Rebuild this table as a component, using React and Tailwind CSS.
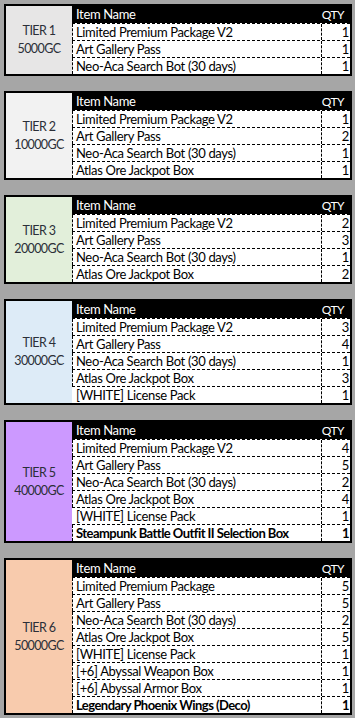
import React from 'react';

const tiers = [
  {
    name: 'TIER 1',
    price: '5000GC',
    bg: 'bg-[#e7e6e6]',
    items: [
      { name: 'Limited Premium Package V2', qty: 1 },
      { name: 'Art Gallery Pass', qty: 1 },
      { name: 'Neo-Aca Search Bot (30 days)', qty: 1 },
    ],
  },
  {
    name: 'TIER 2',
    price: '10000GC',
    bg: 'bg-[#f2f2f2]',
    items: [
      { name: 'Limited Premium Package V2', qty: 1 },
      { name: 'Art Gallery Pass', qty: 2 },
      { name: 'Neo-Aca Search Bot (30 days)', qty: 1 },
      { name: 'Atlas Ore Jackpot Box', qty: 1 },
    ],
  },
  {
    name: 'TIER 3',
    price: '20000GC',
    bg: 'bg-[#e2efda]',
    items: [
      { name: 'Limited Premium Package V2', qty: 2 },
      { name: 'Art Gallery Pass', qty: 3 },
      { name: 'Neo-Aca Search Bot (30 days)', qty: 1 },
      { name: 'Atlas Ore Jackpot Box', qty: 2 },
    ],
  },
  {
    name: 'TIER 4',
    price: '30000GC',
    bg: 'bg-[#ddebf7]',
    items: [
      { name: 'Limited Premium Package V2', qty: 3 },
      { name: 'Art Gallery Pass', qty: 4 },
      { name: 'Neo-Aca Search Bot (30 days)', qty: 1 },
      { name: 'Atlas Ore Jackpot Box', qty: 3 },
      { name: '[WHITE] License Pack', qty: 1, plain: true },
    ],
  },
  {
    name: 'TIER 5',
    price: '40000GC',
    bg: 'bg-[#cc99ff]',
    items: [
      { name: 'Limited Premium Package V2', qty: 4 },
      { name: 'Art Gallery Pass', qty: 5 },
      { name: 'Neo-Aca Search Bot (30 days)', qty: 2 },
      { name: 'Atlas Ore Jackpot Box', qty: 4 },
      { name: '[WHITE] License Pack', qty: 1, plain: true },
      { name: 'Steampunk Battle Outfit II Selection Box', qty: 1, bold: true },
    ],
  },
  {
    name: 'TIER 6',
    price: '50000GC',
    bg: 'bg-[#f8cbad]',
    items: [
      { name: 'Limited Premium Package', qty: 5 },
      { name: 'Art Gallery Pass', qty: 5 },
      { name: 'Neo-Aca Search Bot (30 days)', qty: 2 },
      { name: 'Atlas Ore Jackpot Box', qty: 5 },
      { name: '[WHITE] License Pack', qty: 1 },
      { name: '[+6] Abyssal Weapon Box', qty: 1 },
      { name: '[+6] Abyssal Armor Box', qty: 1 },
      { name: 'Legendary Phoenix Wings (Deco)', qty: 1, bold: true },
    ],
  },
];

function TierTable({ tier }) {
  return (
    <div className="flex border-2 border-black bg-white">
      {/* tier label */}
      <div className={`w-[66px] shrink-0 flex flex-col items-center justify-center text-[#2b2f38] text-[12.5px] tracking-[-0.6px] leading-[18px] ${tier.bg}`}>
        <span>{tier.name}</span>
        <span>{tier.price}</span>
      </div>

      <div className="flex-1 flex flex-col">
        <div className="flex h-[17px] bg-black text-white">
          <div className="flex-1 pl-[4px] leading-[17px]">Item Name</div>
          <div className="w-[29px] pr-[6px] text-right leading-[17px] text-[12px] tracking-[-0.5px]">QTY</div>
        </div>
        {tier.items.map((item, i) => (
          <div
            key={i}
            className={`flex h-[17px] border-t border-dashed border-black ${item.bold ? 'font-bold tracking-[-0.55px]' : ''}`}
          >
            <div className={`flex-1 pl-[3px] leading-[16px] whitespace-nowrap overflow-hidden border-l ${item.plain ? 'border-transparent' : 'border-dashed border-black'}`}>
              {item.name}
            </div>
            <div className="w-[29px] pr-[1px] text-right leading-[16px] border-l border-dashed border-black">
              {item.qty}
            </div>
          </div>
        ))}
      </div>
    </div>
  );
}

export default function App() {
  return (
    <div
      className="w-[355px] min-h-[718px] bg-[#a6a6a6] pt-[4px] pl-[4px] pr-[3px] flex flex-col gap-[15px] text-[13px] tracking-[-0.35px] text-black"
      style={{ fontFamily: 'Lato, "Open Sans", sans-serif' }}
    >
      {tiers.map((t) => (
        <TierTable key={t.name} tier={t} />
      ))}
    </div>
  );
}
